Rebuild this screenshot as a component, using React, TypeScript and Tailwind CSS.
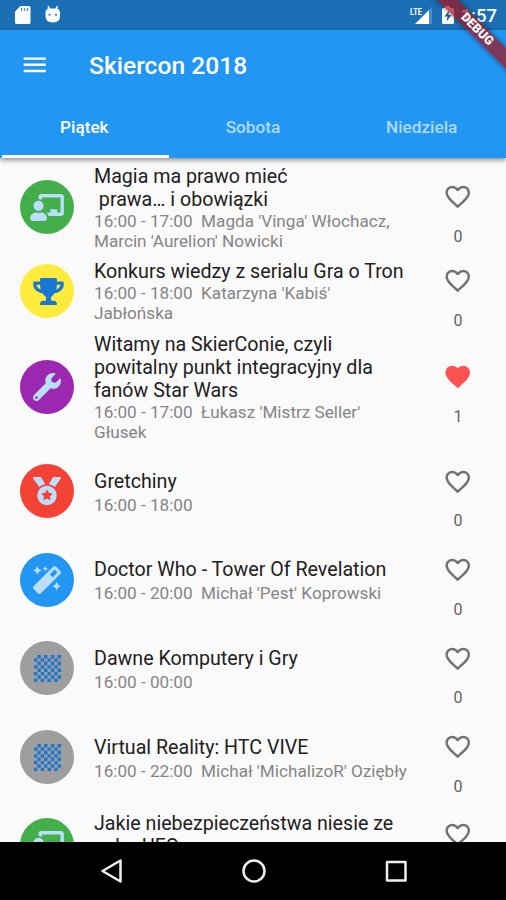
import type { ReactNode } from "react";
import {
  FaChalkboardTeacher,
  FaChessBoard,
  FaMagic,
  FaMedal,
  FaTrophy,
  FaWrench,
} from "react-icons/fa";
import { MdFavorite, MdFavoriteBorder, MdMenu } from "react-icons/md";

type Item = {
  title: string[];
  sub: string[];
  icon: ReactNode;
  color: string;
  height: string;
  votes: number;
};

const teacher = <FaChalkboardTeacher className="h-[27px] w-[34px]" />;
const board = <FaChessBoard className="size-[27px]" />;

const items: Item[] = [
  {
    title: ["Magia ma prawo mieć", " prawa… i obowiązki"],
    sub: ["16:00 - 17:00  Magda 'Vinga' Włochacz,", "Marcin 'Aurelion' Nowicki"],
    icon: teacher,
    color: "bg-[#43ae4a] text-[#bbdefb]",
    height: "h-[96px]",
    votes: 0,
  },
  {
    title: ["Konkurs wiedzy z serialu Gra o Tron"],
    sub: ["16:00 - 18:00  Katarzyna 'Kabiś'", "Jabłońska"],
    icon: <FaTrophy className="ml-[3px] h-[27px] w-[31px]" />,
    color: "bg-[#ffeb3b] text-[#1976d2]",
    height: "h-[72px]",
    votes: 0,
  },
  {
    title: ["Witamy na SkierConie, czyli", "powitalny punkt integracyjny dla", "fanów Star Wars"],
    sub: ["16:00 - 17:00  Łukasz 'Mistrz Seller'", "Głusek"],
    icon: <FaWrench className="size-[28px]" />,
    color: "bg-[#9c27b0] text-[#bbdefb]",
    height: "h-[120px]",
    votes: 1,
  },
  {
    title: ["Gretchiny"],
    sub: ["16:00 - 18:00"],
    icon: <FaMedal className="size-[28px]" />,
    color: "bg-[#f44336] text-[#bbdefb]",
    height: "h-[88.6px]",
    votes: 0,
  },
  {
    title: ["Doctor Who - Tower Of Revelation"],
    sub: ["16:00 - 20:00  Michał 'Pest' Koprowski"],
    icon: <FaMagic className="size-[28px]" />,
    color: "bg-[#2196f3] text-[#bbdefb]",
    height: "h-[88.6px]",
    votes: 0,
  },
  {
    title: ["Dawne Komputery i Gry"],
    sub: ["16:00 - 00:00"],
    icon: board,
    color: "bg-[#9e9e9e] text-[#1976d2]",
    height: "h-[88.6px]",
    votes: 0,
  },
  {
    title: ["Virtual Reality: HTC VIVE"],
    sub: ["16:00 - 22:00  Michał 'MichalizoR' Oziębły"],
    icon: board,
    color: "bg-[#9e9e9e] text-[#1976d2]",
    height: "h-[88.6px]",
    votes: 0,
  },
  {
    title: ["Jakie niebezpieczeństwa niesie ze", "sobą UFO"],
    sub: [""],
    icon: teacher,
    color: "bg-[#43ae4a] text-[#bbdefb]",
    height: "h-[87px]",
    votes: 0,
  },
];

function Row({ item }: { item: Item }) {
  const single = item.title.length === 1 && item.sub.length === 1;
  return (
    <li className={`flex shrink-0 items-center ${item.height}`}>
      <div className={`ml-5 flex size-[54px] shrink-0 items-center justify-center rounded-full ${item.color}`}>
        {item.icon}
      </div>
      <div className={`ml-5 flex flex-1 flex-col whitespace-pre ${single ? "gap-[2px] pt-[2px]" : "pt-px"}`}>
        <div className="text-[19.65px] leading-[23px] text-[#212121]">
          {item.title.map((t) => (
            <div key={t}>{t}</div>
          ))}
        </div>
        <div className="text-[17.15px] leading-[20px] text-[#858585]">
          {item.sub.map((t) => (
            <div key={t} className="min-h-5">
              {t}
            </div>
          ))}
        </div>
      </div>
      <div className="mr-[33px] flex w-[30px] shrink-0 flex-col items-center pt-[15px]">
        {item.votes > 0 ? (
          <MdFavorite className="size-[29.5px] text-[#ff5252]" />
        ) : (
          <MdFavoriteBorder className="size-[29.5px] text-[#737373]" />
        )}
        <span className="mt-[15px] text-[16px] leading-[20px] text-[#616161]">{item.votes}</span>
      </div>
    </li>
  );
}

function StatusBar() {
  return (
    <div className="flex h-[30px] shrink-0 items-center bg-[#1a6fb5] text-white">
      <svg className="ml-[14px] h-[20px] w-[18px]" viewBox="0 0 18 20">
        <path d="M6.5 1H15q1.5 0 1.5 1.5v15Q16.500 19 15 19H2.500Q1 19 1 17.500V6.500z" fill="#fff" />
        <path d="M7.500 3v3M10.500 3v3M13.500 3v3" stroke="#5b93c3" strokeWidth="1.400" />
      </svg>
      <svg className="ml-[12px] h-[20px] w-[18px]" viewBox="0 0 18 20">
        <path d="M4 1l2 4M13.500 1l-2 4" stroke="#fff" strokeWidth="1.500" />
        <path d="M3.500 3.500h10.500l2 3v4.500q0 6.500-7.200 6.500T1.500 11V6.500z" fill="#fff" />
        <circle cx="5.500" cy="9.700" r="1" fill="#1a6fb5" />
        <circle cx="12" cy="9.700" r="1" fill="#1a6fb5" />
      </svg>
      <div className="ml-auto mr-[9px] flex items-center">
        <svg className="h-[22px] w-[24px]" viewBox="0 0 24 22">
          <path d="M22 3v17h-3V6z" fill="#4a8dc5" />
          <path d="M19 6v14H5z" fill="#fff" />
          <text x="0" y="10.500" fontSize="9.500" fontWeight="700" textLength="12" lengthAdjust="spacingAndGlyphs" fill="#fff">
            LTE
          </text>
        </svg>
        <svg className="ml-[7px] h-[20px] w-[14px]" viewBox="0 0 14 20">
          <path d="M4 1h5v2h2.500q1.500 0 1.500 1.500v13q0 1.500-1.500 1.500h-9Q1 19 1 17.500v-13Q1 3 2.500 3H4z" fill="#fff" />
          <path d="M8 5.500L3.500 11.500h3L5.500 16.500 10.500 10h-3z" fill="#1a5c9b" />
        </svg>
        <span className="ml-[6px] pt-px text-[18.5px] font-medium leading-[20px]">1:57</span>
      </div>
    </div>
  );
}

export default function App() {
  return (
    <div className="relative flex h-[900px] w-[506px] flex-col overflow-hidden bg-[#fafafa] font-[Roboto,sans-serif]">
      <StatusBar />
      <header className="z-10 flex h-[128px] shrink-0 flex-col bg-[#2196f3] text-white shadow-[0_2px_5px_rgba(0,0,0,0.45)]">
        <div className="flex h-[70px] items-center">
          <MdMenu className="ml-5 size-[29.5px]" />
          <h1 className="ml-[39.5px] pt-px text-[24.6px] font-medium leading-[30px]">Skiercon 2018</h1>
        </div>
        <nav className="grid flex-1 grid-cols-3 text-center text-[17.2px] font-medium">
          <div className="ml-[2px] flex items-center justify-center border-b-[3px] border-white pt-px pr-[2px]">Piątek</div>
          <div className="flex items-center justify-center border-b-[3px] border-transparent pt-px text-[#b0dafb]">Sobota</div>
          <div className="flex items-center justify-center border-b-[3px] border-transparent pt-px text-[#b0dafb]">Niedziela</div>
        </nav>
      </header>
      <ul className="flex min-h-0 flex-1 flex-col overflow-hidden pt-px">
        {items.map((item) => (
          <Row key={item.title[0]} item={item} />
        ))}
      </ul>
      <footer className="flex h-[58px] shrink-0 items-center justify-center bg-black">
        <svg className="h-[30px] w-[330px]" viewBox="0 0 330 30" fill="none" stroke="#eee" strokeWidth="2.500" strokeLinejoin="round">
          <path d="M32.500 4.500v21L14.500 15z" />
          <circle cx="166" cy="15" r="10.500" />
          <rect x="299" y="6" width="18.500" height="18.500" />
        </svg>
      </footer>
      <div className="absolute left-[417px] top-[22px] z-20 flex h-[15px] w-[120px] rotate-45 items-center justify-center bg-[#a5101b]/70 text-[12.500px] font-black leading-none text-white shadow-[0_0_5px_rgba(0,0,0,0.5)]">
        DEBUG
      </div>
    </div>
  );
}
